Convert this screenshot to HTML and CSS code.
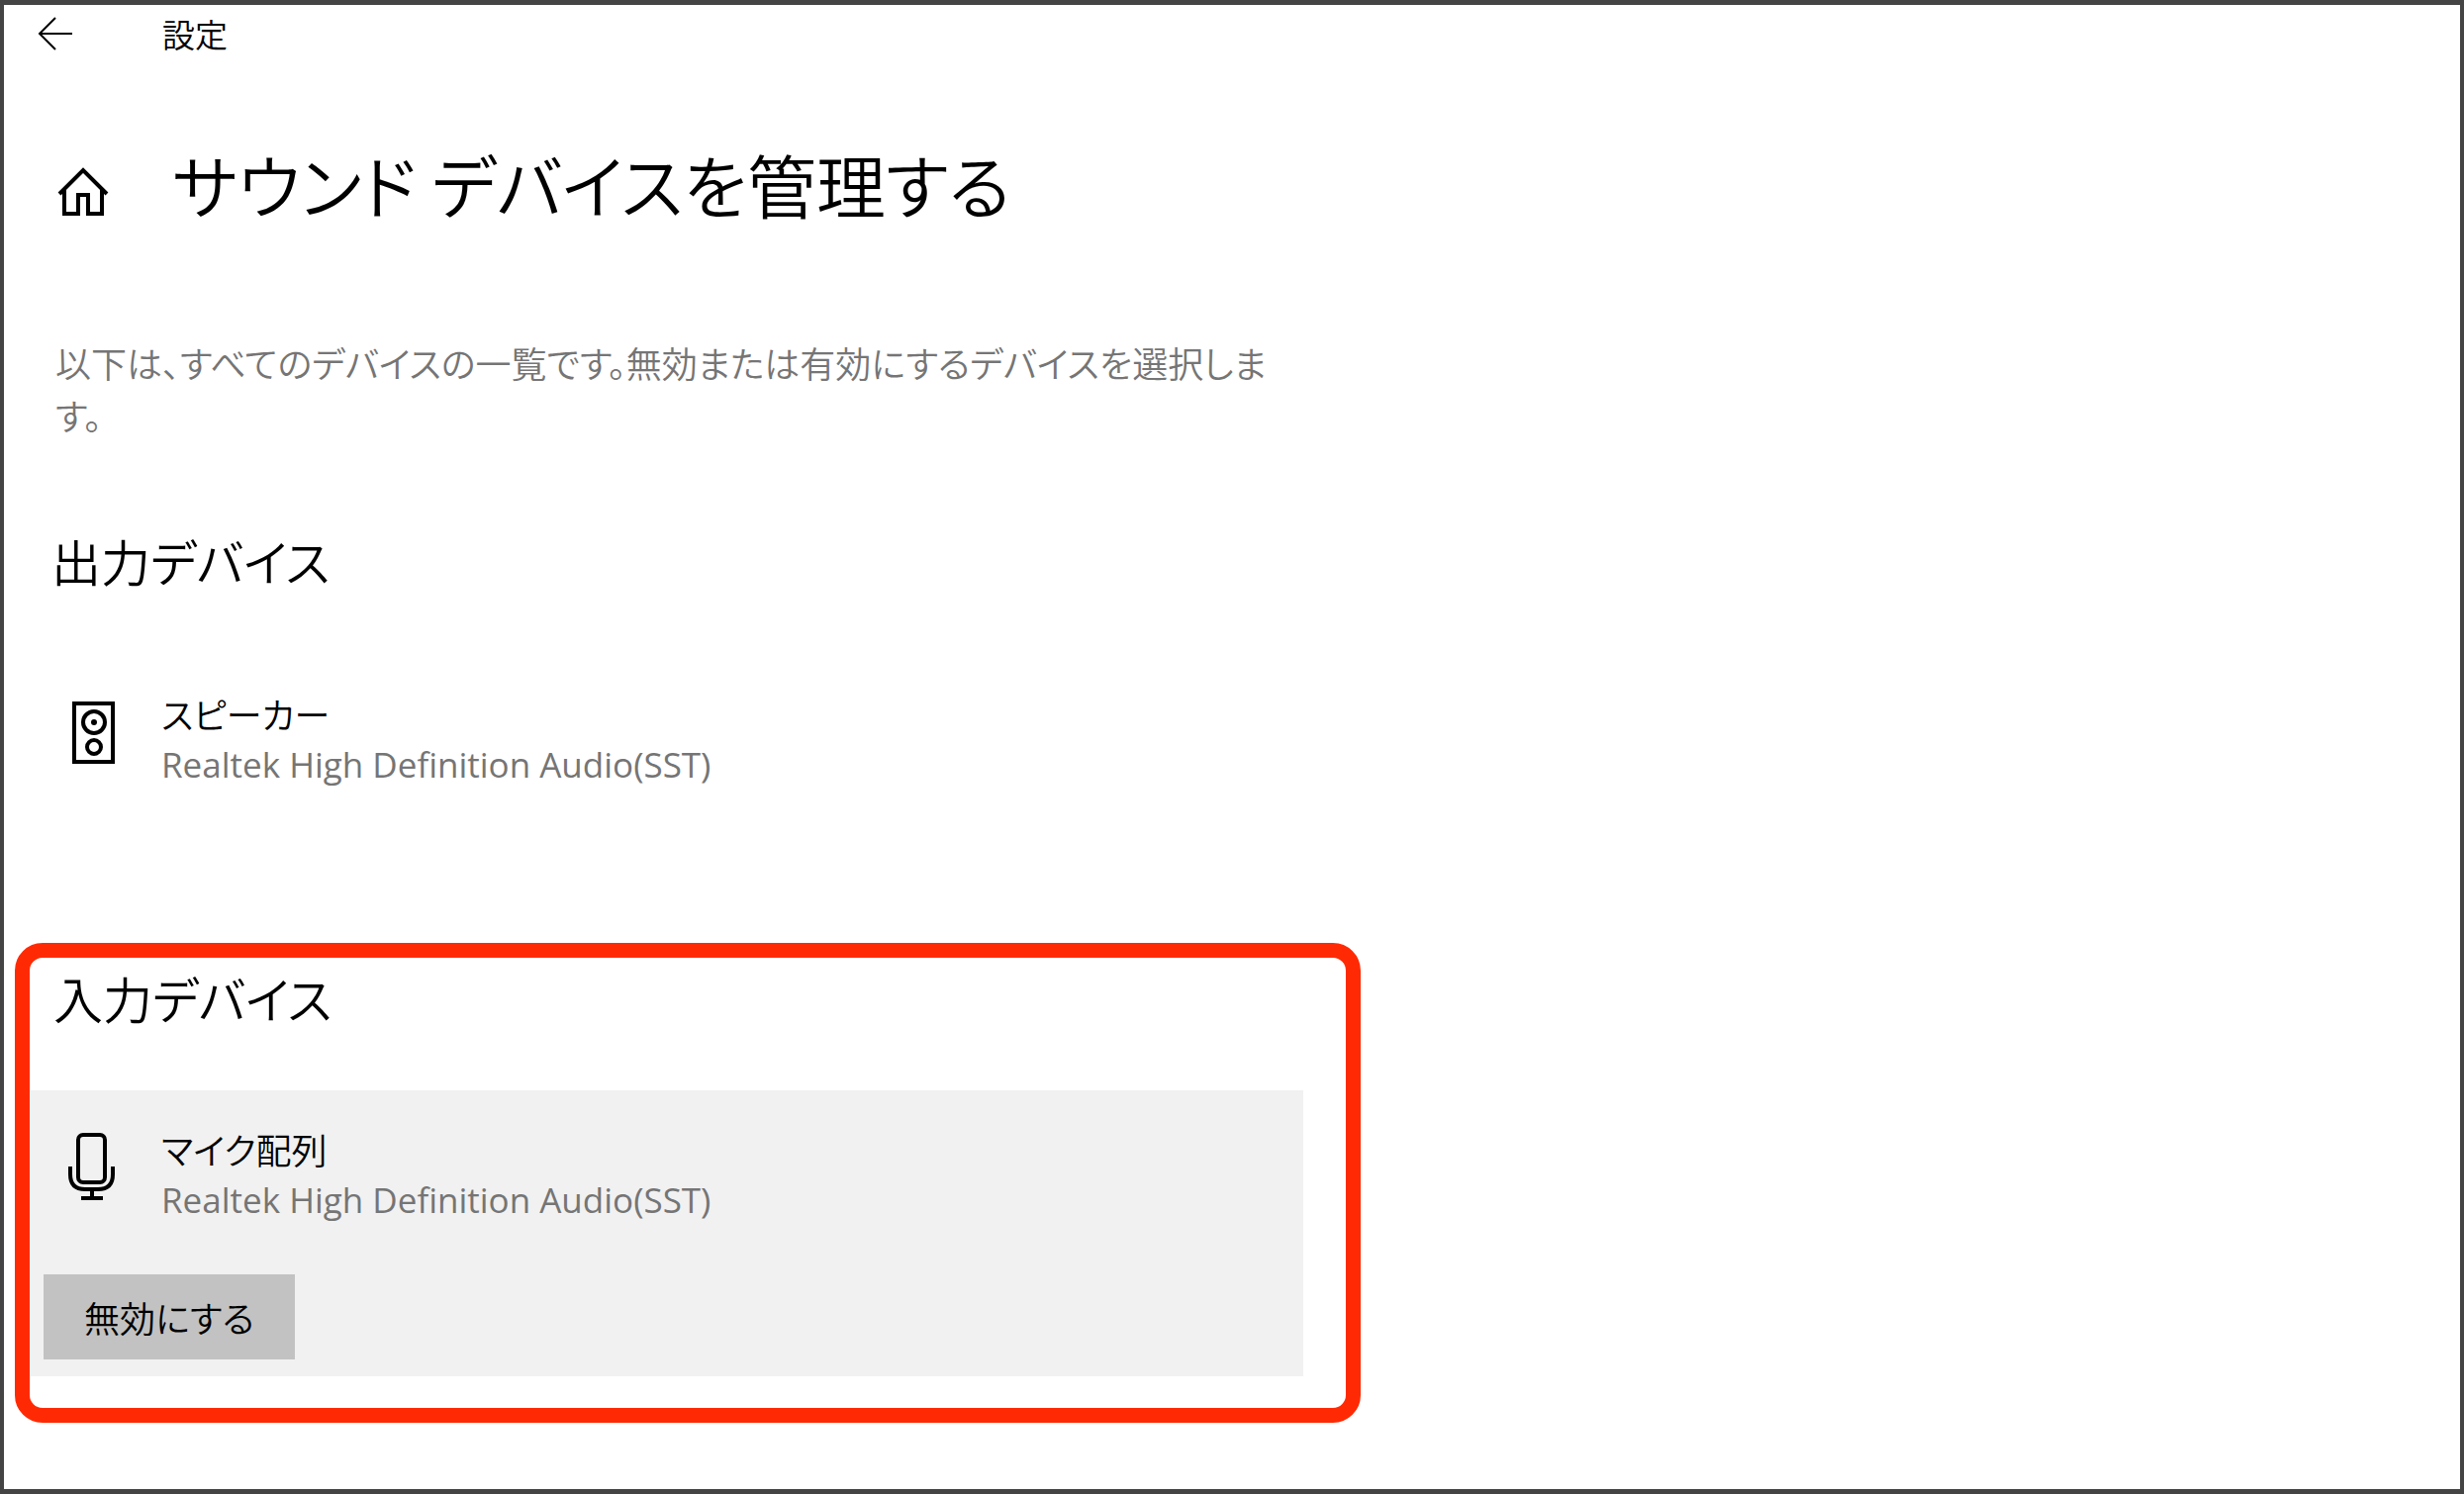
FILE: index.html
```html
<!DOCTYPE html>
<html lang="ja">
  <head>
    <meta charset="UTF-8" />
    <meta name="viewport" content="width=device-width, initial-scale=1.0" />
    <title>設定</title>
    <link rel="stylesheet" href="styles.css">
  </head>

  <body>
    <div class="window">
      <header class="titlebar">
        <button class="icon-button" type="button" aria-label="戻る">
          <svg class="icon-back" viewBox="0 0 36 36">
            <path d="M18 2 L2 18 L18 34 M2 18 H35" />
          </svg>
        </button>
        <span class="titlebar-text">設定</span>
      </header>

      <main>
        <div class="page-header">
          <a class="home-link" href="#" aria-label="ホーム">
            <svg class="icon-home" viewBox="0 0 52 50">
              <path d="M2 27 L26 3 L50 27" />
              <path d="M7 23 V47 H21 V28 H31 V47 H45 V23" />
            </svg>
          </a>
          <h1>サウンド デバイスを管理する</h1>
        </div>

        <p class="description">
          以下は、すべてのデバイスの一覧です。無効または有効にするデバイスを選択します。
        </p>

        <section class="device-section">
          <h2>出力デバイス</h2>
          <div class="device">
            <svg class="device-icon" viewBox="0 0 50 70">
              <rect x="8" y="7" width="39" height="59" />
              <circle cx="28" cy="26" r="11" />
              <circle class="dot" cx="28" cy="26" r="3" />
              <circle cx="28" cy="51" r="7" />
            </svg>
            <div class="device-text">
              <div class="device-name">スピーカー</div>
              <div class="device-driver">Realtek High Definition Audio(SST)</div>
            </div>
          </div>
        </section>

        <section class="device-section highlighted">
          <h2>入力デバイス</h2>
          <div class="device-panel">
            <div class="device">
              <svg class="device-icon" viewBox="0 0 50 70">
                <rect x="12" y="3" width="27" height="48" rx="5" />
                <path d="M4 35 V43 Q4 58 19 58 H32 Q47 58 47 43 V35" />
                <path d="M26 58 V66 M15 67 H37" />
              </svg>
              <div class="device-text">
                <div class="device-name">マイク配列</div>
                <div class="device-driver">Realtek High Definition Audio(SST)</div>
              </div>
            </div>
            <button class="disable-button" type="button">無効にする</button>
          </div>
        </section>
      </main>
    </div>
  </body>
</html>
```
FILE: styles.css
```css
:root {
  --frame-color: #444444;
  --highlight-color: #ff2a04;
  --panel-bg: #f1f1f1;
  --button-bg: #c2c2c2;
  --text-color: #000;
  --muted-color: #757575;
}

* {
  box-sizing: border-box;
}

body {
  margin: 0;
  font-family: "Noto Sans CJK JP", sans-serif;
  font-feature-settings: "palt";
  font-size: 36px;
  font-weight: 350;
  color: var(--text-color);
  background-color: #fff;
}

h1,
h2,
p {
  margin: 0;
  font-weight: inherit;
}

button {
  font: inherit;
  font-feature-settings: inherit;
  color: inherit;
  border: none;
  cursor: pointer;
}

svg {
  display: block;
  fill: none;
  stroke: currentColor;
}

.window {
  min-height: 100vh;
  border: 5px solid var(--frame-color);
  border-width: 5px 4px;
}

.titlebar {
  display: flex;
  align-items: center;
  gap: 90px;
  height: 58px;
  padding-left: 34px;
}

.icon-button {
  padding: 0;
  background: none;
}

.icon-back {
  width: 36px;
  height: 36px;
  stroke-width: 2;
}

.titlebar-text {
  font-size: 33px;
}

.page-header {
  display: flex;
  align-items: flex-end;
  gap: 64px;
  height: 100px;
  margin-top: 73px;
  padding-left: 54px;
}

.home-link {
  padding-bottom: 17px;
  color: inherit;
}

.icon-home {
  width: 52px;
  height: 50px;
  stroke-width: 4;
}

h1 {
  font-size: 70px;
  line-height: 100px;
}

h2 {
  padding-left: 48px;
  font-size: 50px;
  line-height: 72px;
}

.description {
  max-width: 1290px;
  margin-top: 104px;
  padding-left: 52px;
  line-height: 53px;
  color: var(--muted-color);
}

.device-section {
  margin-top: 84px;
}

.device {
  display: flex;
  align-items: flex-start;
  gap: 46px;
  padding-left: 63px;
}

.device-section > .device {
  margin-top: 94px;
}

.device-icon {
  width: 50px;
  height: 70px;
  margin-top: 8px;
  stroke-width: 4;
}

.device-icon .dot {
  fill: currentColor;
  stroke: none;
}

.device-text {
  line-height: 51px;
}

.device-driver {
  font-family: "Open Sans", sans-serif;
  font-size: 35px;
  font-weight: 400;
  color: var(--muted-color);
}

/* Red frame round the input devices */
.highlighted {
  max-width: 1360px;
  margin: 155px 11px 0;
  padding: 4px 0 32px;
  border: 15px solid var(--highlight-color);
  border-radius: 28px;
}

.highlighted h2 {
  padding-left: 24px;
}

.highlighted .device {
  padding-left: 37px;
}

.device-panel {
  margin: 58px 43px 0 0;
  padding: 34px 0 17px;
  background-color: var(--panel-bg);
}

.disable-button {
  display: block;
  height: 86px;
  margin: 50px 0 0 14px;
  padding: 0 41px;
  background-color: var(--button-bg);
}
```
